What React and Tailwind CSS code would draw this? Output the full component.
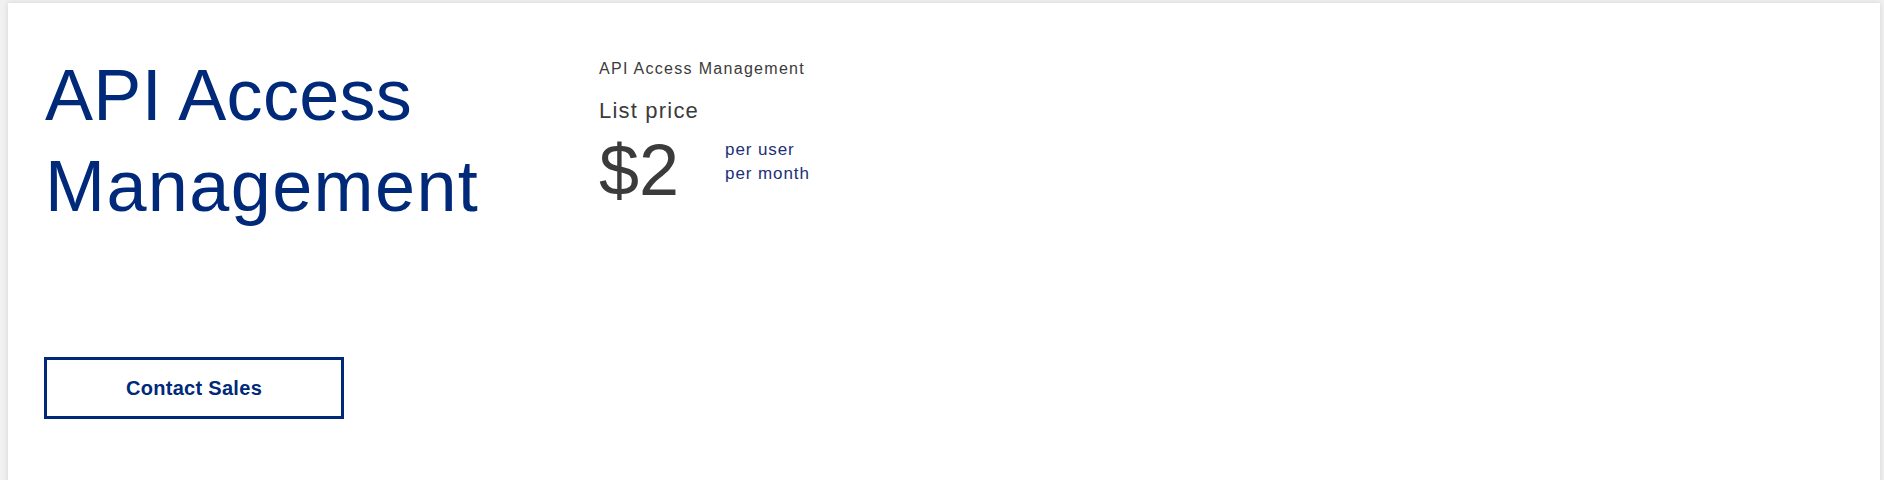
import React from 'react';

const App = () => {
  return (
    <div className="min-h-[480px] h-[480px] overflow-hidden bg-[#f1f1f1] pt-[3px] pl-2 pr-1 font-['Liberation_Sans',Arial,sans-serif]">
      <div className="bg-white shadow-[0_0_6px_rgba(0,0,0,0.12)] h-[520px] pl-[37px] pt-[47px]">
        <div className="flex">
          {/* Title + CTA */}
          <div className="w-[554px] shrink-0">
            <h1 className="text-[72px] leading-[91px] text-[#00297a] font-normal">
              <span className="tracking-[0.3px]">API Access</span>
              <br />
              <span className="tracking-[1.4px]">Management</span>
            </h1>
            <button className="-ml-px mt-[125px] w-[300px] h-[62px] border-[3px] border-[#00297a] text-[#00297a] text-[20px] tracking-[0.3px] font-bold">
              Contact Sales
            </button>
          </div>

          {/* Pricing */}
          <div className="mt-[7px]">
            <p className="text-[16px] leading-6 tracking-[1.3px] text-[#3b3b3b]">API Access Management</p>
            <p className="mt-4 text-[22px] leading-7 tracking-[1.2px] text-[#3b3b3b]">List price</p>
            <div className="mt-[9px] flex items-start">
              <span className="text-[72px] leading-none text-[#3b3b3b]">$2</span>
              <div className="ml-[46px] mt-1 text-[17px] leading-6 tracking-[0.9px] text-[#1c2f78]">
                <p>per user</p>
                <p>per month</p>
              </div>
            </div>
          </div>
        </div>
      </div>
    </div>
  );
};

export default App;
